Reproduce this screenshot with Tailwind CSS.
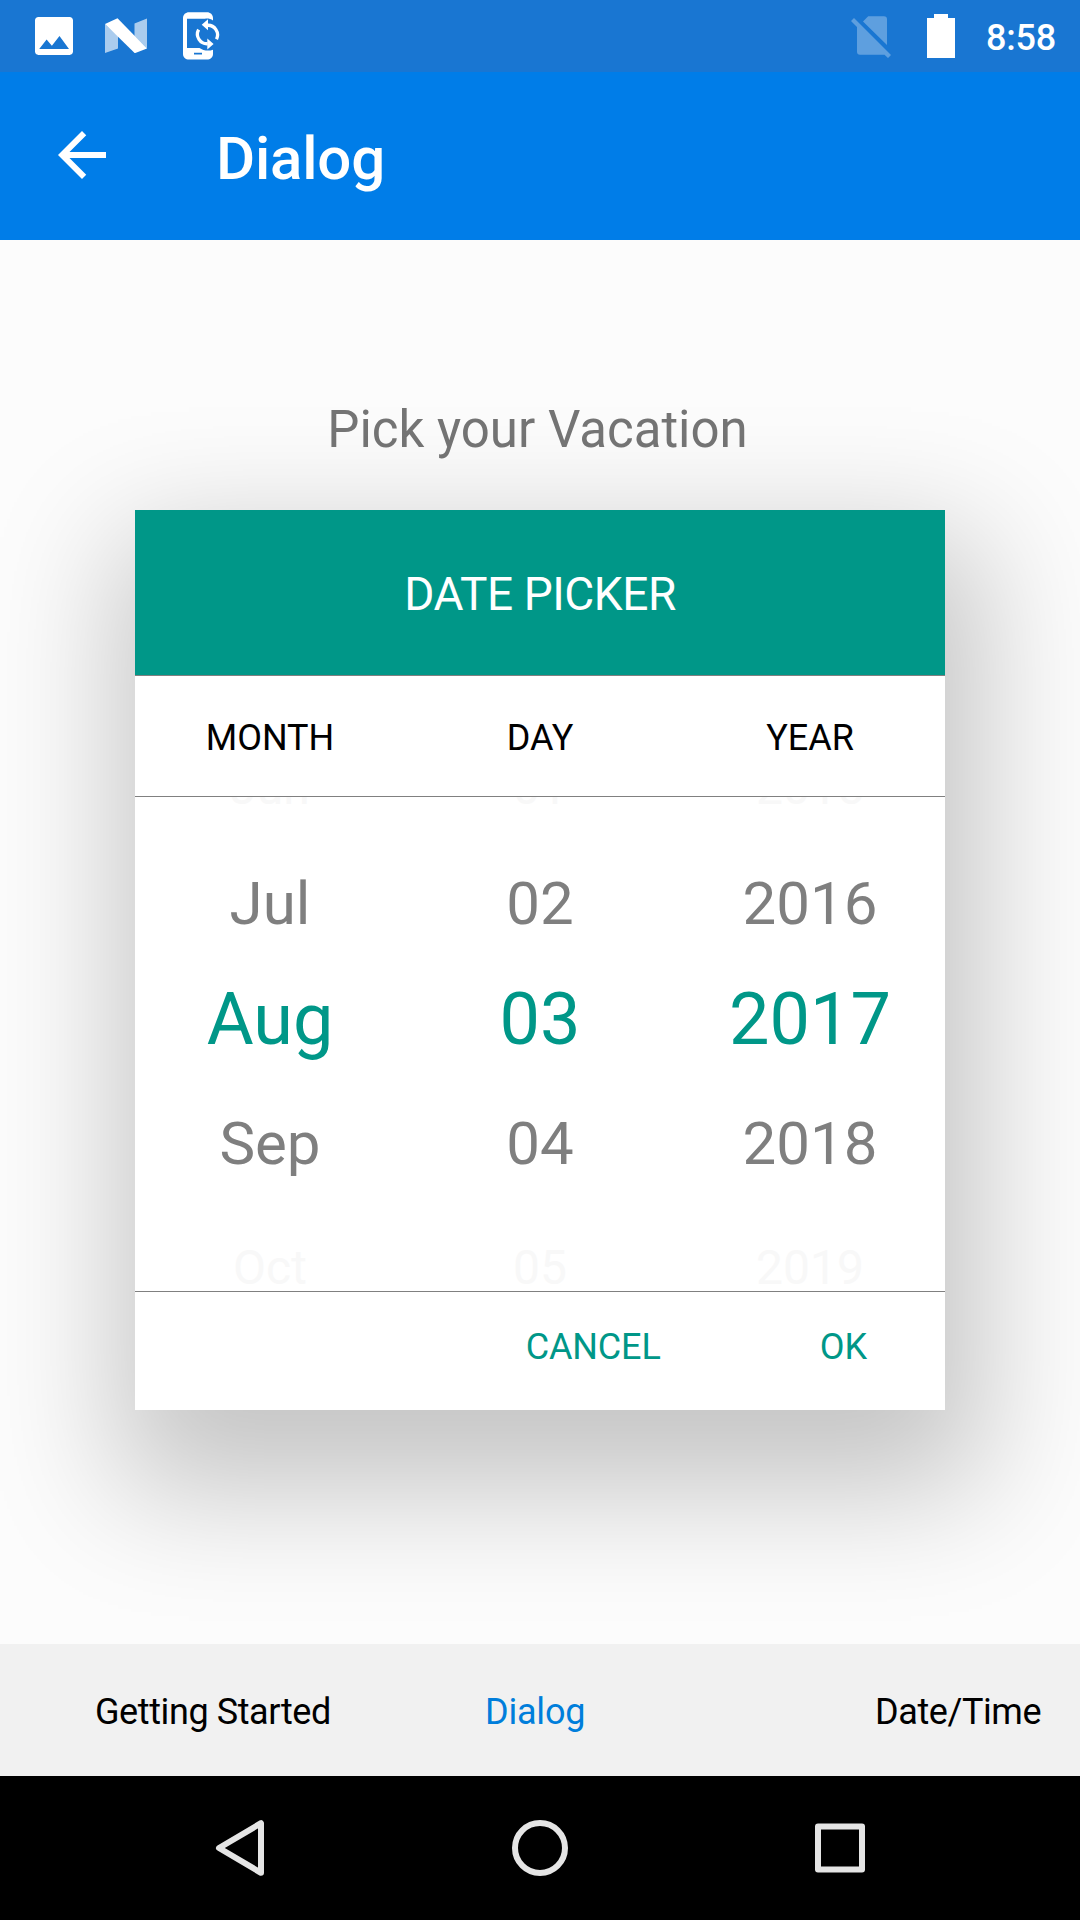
<!DOCTYPE html>
<html lang="en">
<head>
<meta charset="utf-8">
<title>Dialog</title>
<script src="https://cdn.jsdelivr.net/npm/@tailwindcss/browser@4"></script>
</head>
<body class="w-[1080px] h-[1920px] overflow-hidden flex flex-col bg-[#fcfcfc] font-['Roboto',sans-serif] text-black">
  <!-- Status bar -->
  <header class="h-[72px] shrink-0 flex items-start bg-[#1976d2] text-white relative z-10">
    <svg class="w-[38px] h-[38px] ml-[35px] mt-[17px]" viewBox="3 3 18 18" fill="currentColor"><path d="M21 19.400V4.600C21 3.700 20.300 3 19.400 3H4.600C3.700 3 3 3.700 3 4.600v14.800c0 .9.700 1.600 1.600 1.600h14.800c.9 0 1.600-.7 1.600-1.600zM8.500 13.600l2.500 3L14.600 12l4.500 6.200H5l3.500-4.600z"/></svg>
    <svg class="w-[42px] h-[35px] ml-[32px] mt-[18px]" viewBox="0 0 42 35" fill="currentColor"><path opacity=".63" d="M0 6l13 12v12.500L0 35zM29.500 5.500L42 .5v30L29.500 18z"/><path d="M0 6L12.500 .3 42 30.500 29.800 35.200z"/></svg>
    <svg class="w-[37px] h-[48px] ml-[36px] mt-[12px]" viewBox="0 0 37 48" fill="none">
      <path fill="currentColor" fill-rule="evenodd" d="M6 .3h18c3.300 0 6 2.400 6 5.700v2.500C27.500 6.800 25 6.300 22 6.700H4V36h12.500c3.500 2.500 9 3.500 13.500 1.700V42c0 3.200-2.700 5.600-6 5.600H6c-3.300 0-6-2.400-6-5.600V6C0 2.700 2.700.3 6 .3zM11 40.800v1.800h8v-1.800z"/>
      <g stroke="currentColor" stroke-width="3.300"><path d="M24.300 13.300A9.600 9.600 0 0 1 33.500 27.200"/><path d="M24.700 31.700A9.600 9.600 0 0 1 15.600 17.600"/></g>
      <path fill="currentColor" d="M25 7.300v11l-6.300-5.500zM24.300 26.600v11l6.300-5.500z"/>
    </svg>
    <svg class="w-[40px] h-[42px] ml-auto mt-[16px] text-white/30" viewBox="0 0 40 42" fill="currentColor"><path d="M12 5.500L17.200 .2H33a3 3 0 0 1 3 3V29zM3 2l37 37-3 3-3.500-3.200H9a3 3 0 0 1-3-3V11L0 5z"/></svg>
    <svg class="w-[28px] h-[44px] ml-[36px] mt-[14px]" viewBox="0 0 28 44" fill="currentColor"><path d="M7 0h14v4h7v40H0V4h7z"/></svg>
    <span class="ml-[31px] mr-[24px] mt-[17px] text-[36px] leading-[43px] font-medium tracking-[-0.2px]">8:58</span>
  </header>

  <!-- App bar -->
  <div class="h-[168px] shrink-0 flex items-start bg-[#007de8] text-white relative z-10">
    <svg class="size-[72px] ml-[46px] mt-[47px]" viewBox="0 0 24 24" fill="currentColor"><path d="M20 11H7.830l5.590-5.590L12 4l-8 8 8 8 1.410-1.410L7.830 13H20z"/></svg>
    <h1 class="ml-[98px] mt-[52px] text-[60px] leading-[70px] font-medium tracking-[-0.2px]">Dialog</h1>
  </div>

  <main class="h-[1404px] shrink-0 flex flex-col items-center overflow-hidden">
    <p class="mt-[160px] h-[60px] pr-[5px] text-[51px] leading-[60px] text-[#757575]">Pick your Vacation</p>

    <!-- Date picker dialog -->
    <section class="mt-[50px] w-[810px] h-[900px] shrink-0 flex flex-col bg-white shadow-[10px_54px_120px_27px_rgba(0,0,0,0.22)]">
      <div class="h-[165px] bg-[#009788] text-white text-[46px] leading-[168px] text-center tracking-[-0.45px]">DATE PICKER</div>
      <div class="h-[122px] grid grid-cols-3 border-y border-[#808080] text-[36px] leading-[124px] text-center">
        <span>MONTH</span><span>DAY</span><span>YEAR</span>
      </div>
      <div class="h-[494px] overflow-hidden">
        <div class="-mt-[77px] grid grid-cols-3 auto-rows-[120px] text-center text-[60px] leading-[128px] text-[#7f7f7f]">
          <span class="text-[48px] leading-[136px] text-[#f8f8f8]">Jun</span>
          <span class="text-[48px] leading-[136px] text-[#f8f8f8]">01</span>
          <span class="text-[48px] leading-[136px] text-[#f8f8f8]">2015</span>
          <span>Jul</span>
          <span>02</span>
          <span>2016</span>
          <span class="text-[72px] leading-[120px] text-[#009788]">Aug</span>
          <span class="text-[72px] leading-[120px] text-[#009788]">03</span>
          <span class="text-[72px] leading-[120px] text-[#009788]">2017</span>
          <span>Sep</span>
          <span>04</span>
          <span>2018</span>
          <span class="text-[48px] leading-[136px] text-[#f8f8f8]">Oct</span>
          <span class="text-[48px] leading-[136px] text-[#f8f8f8]">05</span>
          <span class="text-[48px] leading-[136px] text-[#f8f8f8]">2019</span>
        </div>
      </div>
      <div class="h-[119px] border-t border-[#808080] flex justify-end pt-[33px] pr-[78px] gap-[159px] text-[36px] leading-[44px] text-[#009788]">
        <button class="h-[44px] tracking-[-0.15px]">CANCEL</button>
        <button class="h-[44px]">OK</button>
      </div>
    </section>
  </main>

  <!-- Tabs -->
  <nav class="h-[132px] shrink-0 flex items-center pt-[4px] pl-[95px] bg-[#f1f1f1] text-[36px] leading-[44px] tracking-[-0.4px] relative z-10">
    <a class="w-[390px]">Getting Started</a>
    <a class="w-[390px] tracking-[-0.2px] text-[#007edb]">Dialog</a>
    <a>Date/Time</a>
  </nav>

  <!-- System navigation -->
  <footer class="h-[144px] shrink-0 flex items-center justify-between pl-[210px] pr-[210px] bg-black text-[#e5e5e5]">
    <svg class="size-[60px]" viewBox="0 0 60 60" fill="none" stroke="currentColor" stroke-width="6" stroke-linejoin="round"><path d="M9 30L51 5.200V54.800z"/></svg>
    <svg class="size-[60px]" viewBox="0 0 60 60" fill="none" stroke="currentColor" stroke-width="6"><circle cx="30" cy="30" r="25"/></svg>
    <svg class="size-[60px]" viewBox="0 0 60 60" fill="none" stroke="currentColor" stroke-width="6" stroke-linejoin="round"><path d="M8 8.500H52V51.500H8z"/></svg>
  </footer>
</body>
</html>
